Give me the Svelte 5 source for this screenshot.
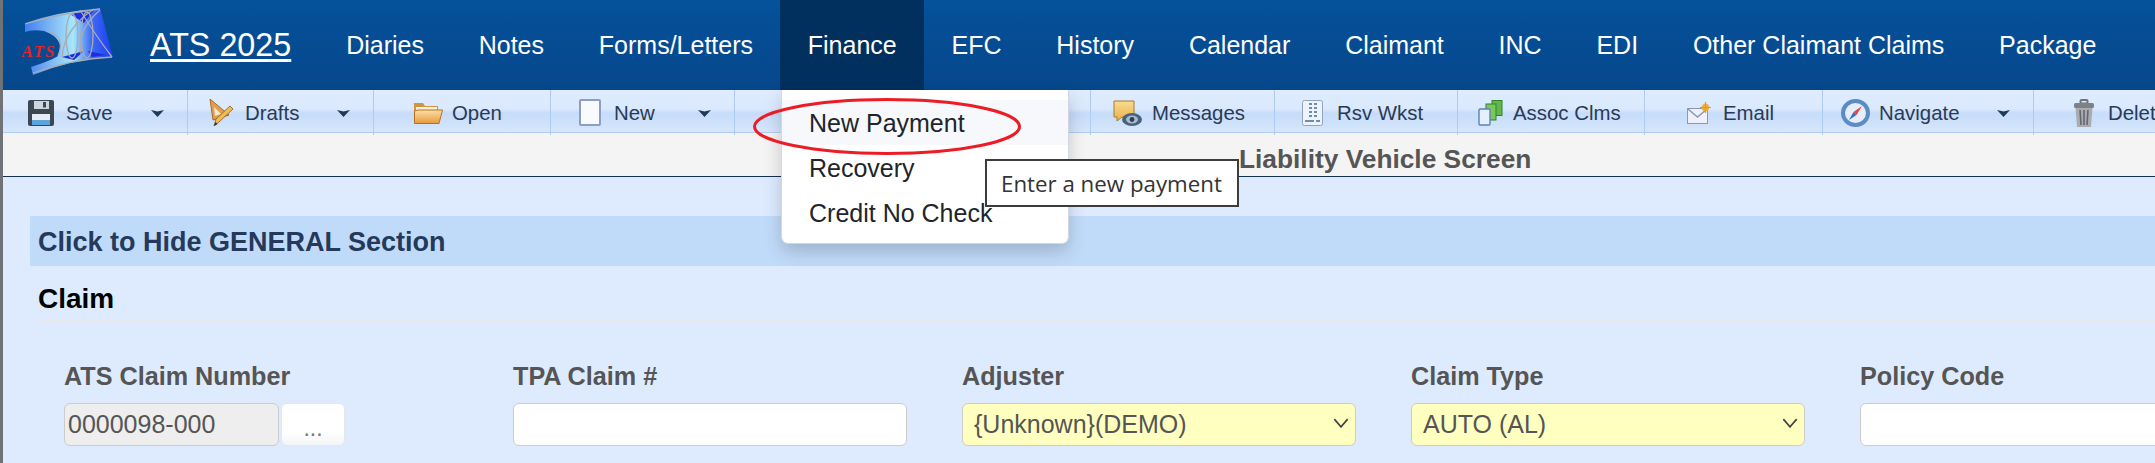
<script>
  const navItems = ["Diaries", "Notes", "Forms/Letters", "Finance", "EFC", "History", "Calendar", "Claimant", "INC", "EDI", "Other Claimant Claims", "Package"];
  const menuItems = ["New Payment", "Recovery", "Credit No Check"];

  // width = slot up to the divider, pad = space before icon, w/h = icon box, gap = icon to label
  const tools = [
    { id: "save", label: "Save", width: 185, pad: 25, w: 26, h: 26, gap: 12, caret: true },
    { id: "drafts", label: "Drafts", width: 186, pad: 21, w: 24, h: 27, gap: 12, caret: true },
    { id: "open", label: "Open", width: 177, pad: 40, w: 29, h: 22, gap: 9 },
    { id: "new", label: "New", width: 184, pad: 28, w: 22, h: 27, gap: 13, caret: true },
    { id: "blank", label: "", width: 356, pad: 0, w: 0, h: 0, gap: 0 },
    { id: "messages", label: "Messages", width: 184, pad: 22, w: 29, h: 26, gap: 10 },
    { id: "rsv", label: "Rsv Wkst", width: 183, pad: 27, w: 21, h: 26, gap: 14 },
    { id: "assoc", label: "Assoc Clms", width: 187, pad: 20, w: 25, h: 26, gap: 10 },
    { id: "email", label: "Email", width: 178, pad: 42, w: 24, h: 22, gap: 12 },
    { id: "navigate", label: "Navigate", width: 211, pad: 18, w: 29, h: 28, gap: 9, caret: true },
    { id: "delete", label: "Delete", width: 150, pad: 39, w: 22, h: 28, gap: 13 }
  ];

  const fields = [
    { label: "ATS Claim Number", kind: "locked", value: "0000098-000" },
    { label: "TPA Claim #", kind: "input", value: "" },
    { label: "Adjuster", kind: "select", value: "{Unknown}(DEMO)" },
    { label: "Claim Type", kind: "select", value: "AUTO (AL)" },
    { label: "Policy Code", kind: "input", value: "" }
  ];
</script>

<div class="page">
  <header class="navbar">
    <svg class="logo" viewBox="0 0 92 70" aria-hidden="true">
      <defs>
        <linearGradient id="wing" x1="0" x2="1" y1="0" y2="0">
          <stop offset="0" stop-color="#3f7ff0" />
          <stop offset="0.3" stop-color="#7fb8f6" />
          <stop offset="0.55" stop-color="#a6e8fa" />
          <stop offset="0.75" stop-color="#3f6cf4" />
          <stop offset="1" stop-color="#1c3cf0" />
        </linearGradient>
        <filter id="soft"><feGaussianBlur stdDeviation="0.6" /></filter>
      </defs>
      <g filter="url(#soft)">
        <path d="M3 16 Q35 5 78 1 L91 50 Q50 52 11 68 L9 60 Q28 54 36 49 Q44 32 22 24 Q10 22 3 25 Z" fill="url(#wing)" />
        <path d="M48 7 L72 3 L62 16 Z M40 50 L62 44 L52 53 Z M66 44 L84 48 L70 50 Z" fill="#1a2ee0" />
        <g fill="none" stroke="#a8aab4" stroke-width="1.3">
          <path d="M3 17 Q35 7 78 2" />
          <path d="M11 66 Q50 52 90 50" />
          <path d="M36 49 Q44 30 26 24" />
          <ellipse cx="50" cy="29" rx="6" ry="22" />
          <ellipse cx="65" cy="28" rx="6" ry="23" />
          <path d="M72 2 Q42 22 40 50 M58 3 Q72 26 90 50 M78 3 Q52 26 60 50" />
        </g>
        <text x="0" y="50" class="logo-text">ATS</text>
      </g>
    </svg>
    <a class="brand" href="#home">ATS 2025</a>
    <nav class="nav-list">
      {#each navItems as item}
        <span class="nav-item" class:active={item === "Finance"}>{item}</span>
      {/each}
    </nav>
  </header>

  <div class="toolbar">
    {#each tools as tool}
      <div class="tool" style="width: {tool.width}px; padding-left: {tool.pad}px">
        {#if tool.id === "save"}
          <svg class="icon" style="width: {tool.w}px; height: {tool.h}px" viewBox="0 0 26 26"><rect width="26" height="26" rx="2" fill="#3d4754" /><rect x="6" y="1" width="15" height="8" fill="#cdd4dc" /><rect x="15" y="2" width="3" height="5.5" fill="#3d4754" /><rect x="4" y="14" width="18" height="11" fill="#e6edf4" /><rect x="4" y="20" width="18" height="5" fill="#5aa6dc" /></svg>
        {:else if tool.id === "drafts"}
          <svg class="icon" style="width: {tool.w}px; height: {tool.h}px" viewBox="0 0 24 27"><path d="M1 0 L20 16 L4 21 Z" fill="#e2a04c" stroke="#a8692a" /><path d="M5 8 L12 15 L6 17 Z" fill="#f4e8d0" /><path d="M21 7 L24 10 L10 23 L5 27 L7 20 Z" fill="#f2bc52" stroke="#8a5a20" stroke-width="0.8" /><path d="M5 27 L6.5 23 L8.5 25 Z" fill="#203040" /></svg>
        {:else if tool.id === "open"}
          <svg class="icon" style="width: {tool.w}px; height: {tool.h}px" viewBox="0 0 29 22">
            <defs><linearGradient id="folder" x1="0" x2="0" y1="0" y2="1"><stop offset="0" stop-color="#fbe0a8" /><stop offset="1" stop-color="#e89a3c" /></linearGradient></defs>
            <path d="M0 1 H9 L11 4 H24 V10 H0 Z" fill="#cf9444" /><path d="M2 5 H23 V10 H2 Z" fill="#fbf0d8" /><path d="M0.5 21.5 V9 L4 8 H28.5 L25 21.5 Z" fill="url(#folder)" stroke="#b4701f" />
          </svg>
        {:else if tool.id === "new"}
          <svg class="icon" style="width: {tool.w}px; height: {tool.h}px" viewBox="0 0 22 27"><rect x="1" y="1" width="20" height="25" rx="1" fill="#f8fafe" stroke="#8d9dc4" stroke-width="2" /></svg>
        {:else if tool.id === "messages"}
          <svg class="icon" style="width: {tool.w}px; height: {tool.h}px" viewBox="0 0 29 26">
            <defs><linearGradient id="note" x1="0" x2="0" y1="0" y2="1"><stop offset="0" stop-color="#f8dc90" /><stop offset="1" stop-color="#eab04a" /></linearGradient></defs>
            <path d="M1 1 H21 V17 H9 L4 21 V17 H1 Z" fill="url(#note)" stroke="#ad7a2c" /><ellipse cx="19" cy="19.5" rx="10" ry="6.5" fill="#47617f" /><ellipse cx="19" cy="19.5" rx="6" ry="4" fill="#a9bacd" /><circle cx="19" cy="19.5" r="2.4" fill="#2c3e50" />
          </svg>
        {:else if tool.id === "rsv"}
          <svg class="icon" style="width: {tool.w}px; height: {tool.h}px" viewBox="0 0 21 26"><rect x="0.5" y="0.5" width="20" height="25" rx="2" fill="#eef3fa" stroke="#93a3bd" /><g fill="#6a8cb4"><rect x="7" y="3" width="3" height="2" /><rect x="12" y="3" width="3" height="2" /><rect x="7" y="7" width="3" height="2" /><rect x="12" y="7" width="3" height="2" /><rect x="7" y="11" width="3" height="2" /><rect x="12" y="11" width="3" height="2" /><rect x="7" y="15" width="3" height="2" /><rect x="12" y="15" width="3" height="2" /><rect x="3" y="20" width="9" height="2" /><rect x="14" y="20" width="4" height="2" /></g></svg>
        {:else if tool.id === "assoc"}
          <svg class="icon" style="width: {tool.w}px; height: {tool.h}px" viewBox="0 0 25 26"><rect x="14" y="0.5" width="10" height="15" fill="#62b848" stroke="#37802a" /><rect x="8" y="4" width="10" height="16" fill="#78c85c" stroke="#37802a" /><rect x="1" y="9" width="11" height="16" rx="1" fill="#e6effc" stroke="#5d82b8" stroke-width="1.4" /></svg>
        {:else if tool.id === "email"}
          <svg class="icon" style="width: {tool.w}px; height: {tool.h}px" viewBox="0 0 24 22"><rect x="0.5" y="6.5" width="20" height="15" fill="#eef0fa" stroke="#8d94bd" /><path d="M1 7 L10.5 15 L20 7" fill="none" stroke="#8d94bd" stroke-width="1.4" /><circle cx="18.5" cy="5.5" r="3.8" fill="#f0b040" /><path d="M18.5 0 V11 M13 5.5 H24" stroke="#e09828" stroke-width="1.2" /></svg>
        {:else if tool.id === "navigate"}
          <svg class="icon" style="width: {tool.w}px; height: {tool.h}px" viewBox="0 0 29 28"><ellipse cx="14.5" cy="14" rx="12.5" ry="12" fill="#e4edfa" stroke="#5a8cc6" stroke-width="4" /><path d="M21 7 L15.5 16 L12.5 13 Z" fill="#e04848" /><path d="M8 21 L12.5 13 L15.5 16 Z" fill="#3a70c0" /></svg>
        {:else if tool.id === "delete"}
          <svg class="icon" style="width: {tool.w}px; height: {tool.h}px" viewBox="0 0 22 28"><rect x="7.5" y="1" width="7" height="3.5" rx="1" fill="none" stroke="#6f747a" stroke-width="2" /><rect x="1" y="4" width="20" height="5" rx="1.5" fill="#7d8288" /><path d="M2.5 9 H19.5 L18 28 H4 Z" fill="#a9adb2" /><path d="M7 11 L8 26 M11 11 V26 M15 11 L14 26" stroke="#63676c" stroke-width="1.6" /></svg>
        {/if}
        {#if tool.label}<span class="tool-label" style="margin-left: {tool.gap}px">{tool.label}</span>{/if}
        {#if tool.caret}
          <svg class="caret" viewBox="0 0 13 7"><path d="M0 0 L6.5 1.6 L13 0 L6.5 7 Z" fill="#1d3a56" /></svg>
        {/if}
      </div>
    {/each}
  </div>

  <div class="title-row"><h1>Liability Vehicle Screen</h1></div>

  <main class="content">
    <div class="band">Click to Hide GENERAL Section</div>
    <h2 class="claim">Claim</h2>
    <div class="fields">
      {#each fields as field}
        <div class="field">
          <div class="field-label">{field.label}</div>
          {#if field.kind === "locked"}
            <div class="locked-row">
              <div class="control locked">{field.value}</div>
              <button class="more">...</button>
            </div>
          {:else if field.kind === "select"}
            <div class="control select">
              <span>{field.value}</span>
              <svg class="chevron" viewBox="0 0 14 9"><path d="M1 1 L7 8 L13 1" fill="none" stroke="#444" stroke-width="1.5" /></svg>
            </div>
          {:else}
            <div class="control"></div>
          {/if}
        </div>
      {/each}
    </div>
  </main>

  <div class="menu">
    {#each menuItems as item, i}
      <div class="menu-item" class:hover={i === 0}>{item}</div>
    {/each}
  </div>
  <svg class="circle" viewBox="0 0 268 57"><ellipse cx="134" cy="28.5" rx="132.5" ry="27" fill="none" stroke="#ed1c24" stroke-width="3" /></svg>
  <div class="tooltip">Enter a new payment</div>
</div>

<style>
  :global(body) {
    margin: 0;
    background: #deebfe;
  }

  .page {
    position: relative;
    width: 2155px;
    height: 463px;
    overflow: hidden;
    border-left: 3px solid #6f7276;
    box-sizing: border-box;
    font-family: "Liberation Sans", Arial, sans-serif;
    background: #deebfe;
  }

  .navbar {
    height: 90px;
    display: flex;
    align-items: center;
    background: linear-gradient(#05519b, #06478b);
    color: #fff;
  }

  .logo {
    width: 92px;
    height: 70px;
    margin: -7px 0 0 19px;
    flex: none;
  }

  .logo-text {
    font: italic bold 17px "Liberation Serif", serif;
    fill: #e6262c;
    letter-spacing: 1.5px;
  }

  .brand {
    margin-left: 36px;
    font-size: 32.3px;
    color: #fff;
    text-decoration: underline;
    text-underline-offset: 3px;
  }

  .nav-list {
    display: flex;
    margin-left: 27.5px;
    align-self: stretch;
  }

  .nav-item {
    display: flex;
    align-items: center;
    padding: 0 27.4px;
    font-size: 25px;
    white-space: nowrap;
  }

  .nav-item.active {
    background: #02305e;
  }

  .toolbar {
    display: flex;
    height: 42px;
    background: linear-gradient(#dfecff 0%, #dbe9fe 45%, #c6dcf9 55%, #d6e6fc 100%);
    border-bottom: 1px solid #b0cbf2;
    white-space: nowrap;
  }

  .tool {
    flex: none;
    display: flex;
    align-items: center;
    height: 45px;
    box-sizing: border-box;
    border-right: 1px solid #b0cbf2;
    position: relative;
  }

  .icon {
    flex: none;
  }

  .tool-label {
    padding-top: 1px;
    font-size: 20.4px;
    color: #2a3a55;
  }

  .caret {
    position: absolute;
    right: 23px;
    top: 20px;
    width: 13px;
    height: 7px;
  }

  .title-row {
    height: 34px;
    padding: 9px 0 0 1236px;
    background: #f4f4f4;
    border-bottom: 1px solid #14304f;
    display: flex;
    align-items: center;
  }

  h1 {
    margin: 0;
    font-size: 26.3px;
    font-weight: bold;
    color: #555;
  }

  .content {
    padding: 39px 0 0 27px;
  }

  .band {
    height: 50px;
    line-height: 52px;
    background: #c0dbf9;
    padding-left: 8px;
    font-size: 27px;
    font-weight: bold;
    color: #25395a;
  }

  .claim {
    margin: 0 0 0 8px;
    height: 54px;
    line-height: 66px;
    font-size: 28px;
    color: #000;
    border-bottom: 1px solid #e8e8e8;
  }

  .fields {
    display: grid;
    grid-template-columns: repeat(5, 394px);
    column-gap: 55px;
    padding: 39px 0 0 34px;
  }

  .field-label {
    height: 32px;
    line-height: 32px;
    margin-bottom: 11px;
    font-size: 25.2px;
    font-weight: bold;
    color: #555;
    white-space: nowrap;
  }

  .control {
    height: 43px;
    line-height: 41px;
    box-sizing: border-box;
    background: #fff;
    border: 1px solid #ccc;
    border-radius: 6px;
    padding: 0 11px;
    font-size: 25px;
    color: #555;
  }

  .locked-row {
    display: flex;
    gap: 2px;
  }

  .locked {
    width: 215px;
    background: #eee;
    padding: 0 3px;
  }

  .more {
    width: 64px;
    height: 43px;
    border: 1px solid #e4e8ee;
    border-radius: 6px;
    background: linear-gradient(#fff 70%, #f2f4f6);
    font: 23px "Liberation Sans", sans-serif;
    color: #777;
    padding: 8px 0 0;
  }

  .select {
    background: #ffffc0;
    display: flex;
    align-items: center;
    justify-content: space-between;
    padding-right: 6px;
  }

  .chevron {
    width: 16px;
    height: 10px;
    margin-top: -4px;
  }

  .menu {
    position: absolute;
    left: 778px;
    top: 90px;
    width: 288px;
    height: 154px;
    box-sizing: border-box;
    padding-top: 10px;
    background: #fff;
    border: 1px solid #d0d8e4;
    border-top: none;
    border-radius: 0 0 7px 7px;
    box-shadow: 0 8px 18px rgba(0, 0, 0, 0.18);
  }

  .menu-item {
    height: 45px;
    line-height: 46px;
    padding-left: 27px;
    font-size: 25px;
    color: #212529;
  }

  .menu-item.hover {
    background: #f6f8fb;
  }

  .circle {
    position: absolute;
    left: 750px;
    top: 98px;
    width: 268px;
    height: 57px;
  }

  .tooltip {
    position: absolute;
    left: 982px;
    top: 159px;
    width: 254px;
    height: 48px;
    box-sizing: border-box;
    border: 2px solid #3c3c3c;
    background: #fff;
    font: 22.3px/45px "Open Sans", sans-serif;
    color: #333;
    padding-left: 14px;
    white-space: nowrap;
  }
</style>
